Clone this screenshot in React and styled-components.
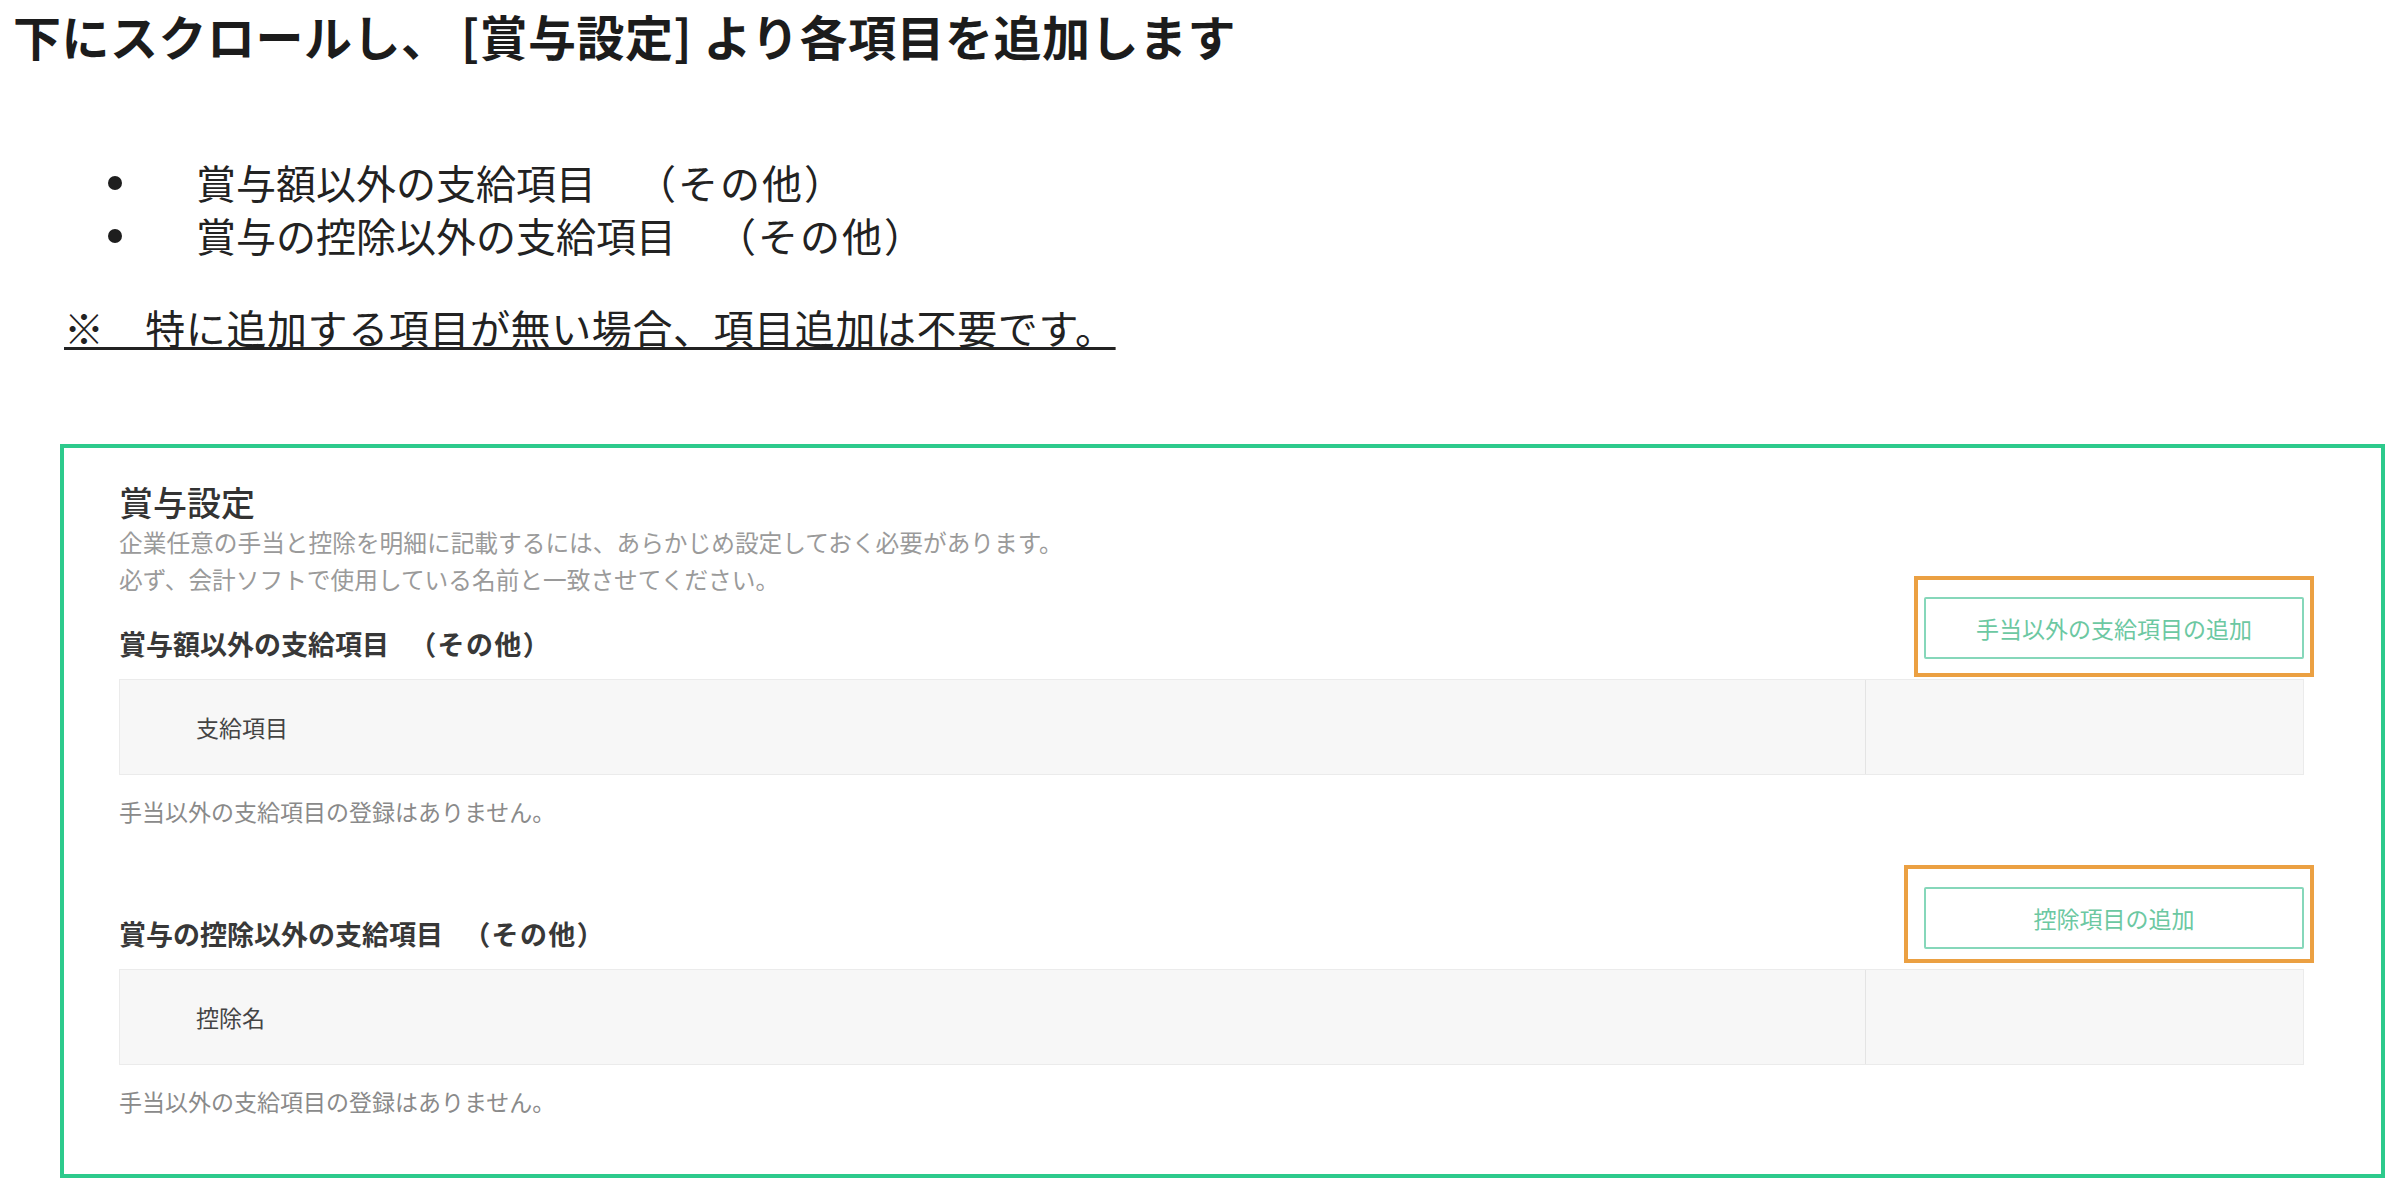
import React from 'react'
import styled, { createGlobalStyle } from 'styled-components'

const GlobalStyle = createGlobalStyle`
  body {
    margin: 0;
    background: #ffffff;
    font-family: "Noto Sans CJK JP", "Noto Sans", sans-serif;
  }
`

const sections = [
    {
        title: '賞与額以外の支給項目',
        button: '手当以外の支給項目の追加',
        column: '支給項目',
        empty: '手当以外の支給項目の登録はありません。',
        gap: -1,
        mark: { top: 21, right: 10, bottom: 18, left: 10 },
    },
    {
        title: '賞与の控除以外の支給項目',
        button: '控除項目の追加',
        column: '控除名',
        empty: '手当以外の支給項目の登録はありません。',
        gap: 61,
        mark: { top: 22, right: 10, bottom: 14, left: 20 },
    },
]

export default function App() {
    return (
        <>
            <GlobalStyle />
            <Page>
                <Heading>下にスクロールし、 [賞与設定] より各項目を追加します</Heading>
                <Points>
                    {sections.map((section, index) => (
                        <Point key={index}>
                            {section.title}　<Other>（その他）</Other>
                        </Point>
                    ))}
                </Points>
                <Note>※　特に追加する項目が無い場合、項目追加は不要です。</Note>

                <Panel>
                    <PanelTitle>賞与設定</PanelTitle>
                    <Lead>
                        企業任意の手当と控除を明細に記載するには、あらかじめ設定しておく必要があります。
                        <br />
                        必ず、会計ソフトで使用している名前と一致させてください。
                    </Lead>
                    {sections.map((section, index) => (
                        <div key={index}>
                            <SectionHead $gap={section.gap}>
                                <SectionTitle>
                                    {section.title}　<Other $shift={0.25}>（その他）</Other>
                                </SectionTitle>
                                <Action>
                                    <AddButton type="button">{section.button}</AddButton>
                                    <Highlight $m={section.mark} />
                                </Action>
                            </SectionHead>
                            <Table>
                                <HeadCell>{section.column}</HeadCell>
                                <HeadCell />
                            </Table>
                            <Empty>{section.empty}</Empty>
                        </div>
                    ))}
                </Panel>
            </Page>
        </>
    )
}

const Page = styled.div`
    width: 2400px;
    min-height: 1192px;
    box-sizing: border-box;
    padding-bottom: 15px;
`

const Heading = styled.h1`
    margin: 0;
    padding-left: 13px;
    font-size: 48px;
    font-weight: 700;
    line-height: 70px;
    letter-spacing: 0.5px;
    color: #1c1c1c;
`

const Points = styled.ul`
    list-style: none;
    margin: 86px 0 0;
    padding: 0 0 0 108px;
`

const Point = styled.li`
    display: flex;
    align-items: center;
    white-space: pre;
    font-size: 40px;
    line-height: 53px;
    color: #222222;
    &::before {
        content: "";
        flex: none;
        width: 14px;
        height: 14px;
        border-radius: 50%;
        background: #1e1e1e;
        margin-right: 74px;
    }
`

const Other = styled.span`
    margin-left: ${p => p.$shift || 0}em;
    letter-spacing: 0.05em;
`

const Note = styled.p`
    margin: 39px 0 0 64px;
    font-size: 40px;
    line-height: 53px;
    letter-spacing: 0.6px;
    color: #222222;
    text-decoration: underline;
    text-decoration-thickness: 3px;
    text-underline-offset: 3px;
`

const Panel = styled.section`
    margin: 90px 15px 0 60px;
    border: 4px solid #2dca8c;
    padding: 34px 77px 58px 55px;
`

const PanelTitle = styled.h2`
    margin: 0;
    font-size: 34px;
    line-height: 40px;
    font-weight: 500;
    color: #333333;
`

const Lead = styled.p`
    margin: 2px 0 0;
    font-size: 23.7px;
    line-height: 37px;
    color: #9a9a9a;
`

const SectionHead = styled.div`
    display: flex;
    justify-content: space-between;
    align-items: flex-end;
    margin-top: ${p => p.$gap}px;
`

const SectionTitle = styled.h3`
    margin: 0;
    white-space: pre;
    font-size: 27px;
    line-height: 30px;
    font-weight: 700;
    color: #383838;
`

const Action = styled.div`
    position: relative;
`

const AddButton = styled.button`
    display: block;
    width: 380px;
    height: 62px;
    border: 2px solid #86d7ba;
    border-radius: 2px;
    background: #ffffff;
    color: #6cc8a2;
    font-family: inherit;
    font-size: 23px;
    cursor: pointer;
`

const Highlight = styled.span`
    position: absolute;
    top: -${p => p.$m.top}px;
    right: -${p => p.$m.right}px;
    bottom: -${p => p.$m.bottom}px;
    left: -${p => p.$m.left}px;
    border: 4px solid #eba042;
    pointer-events: none;
`

const Table = styled.div`
    display: grid;
    grid-template-columns: 1fr 438px;
    height: 96px;
    box-sizing: border-box;
    margin-top: 20px;
    background: #f7f7f7;
    border: 1px solid #ebebeb;
`

const HeadCell = styled.div`
    display: flex;
    align-items: center;
    padding-left: 76px;
    font-size: 23px;
    color: #444444;
    & + & {
        border-left: 1px solid #e4e4e4;
    }
`

const Empty = styled.p`
    margin: 21px 0 0;
    font-size: 23px;
    line-height: 30px;
    color: #8a8a8a;
`
